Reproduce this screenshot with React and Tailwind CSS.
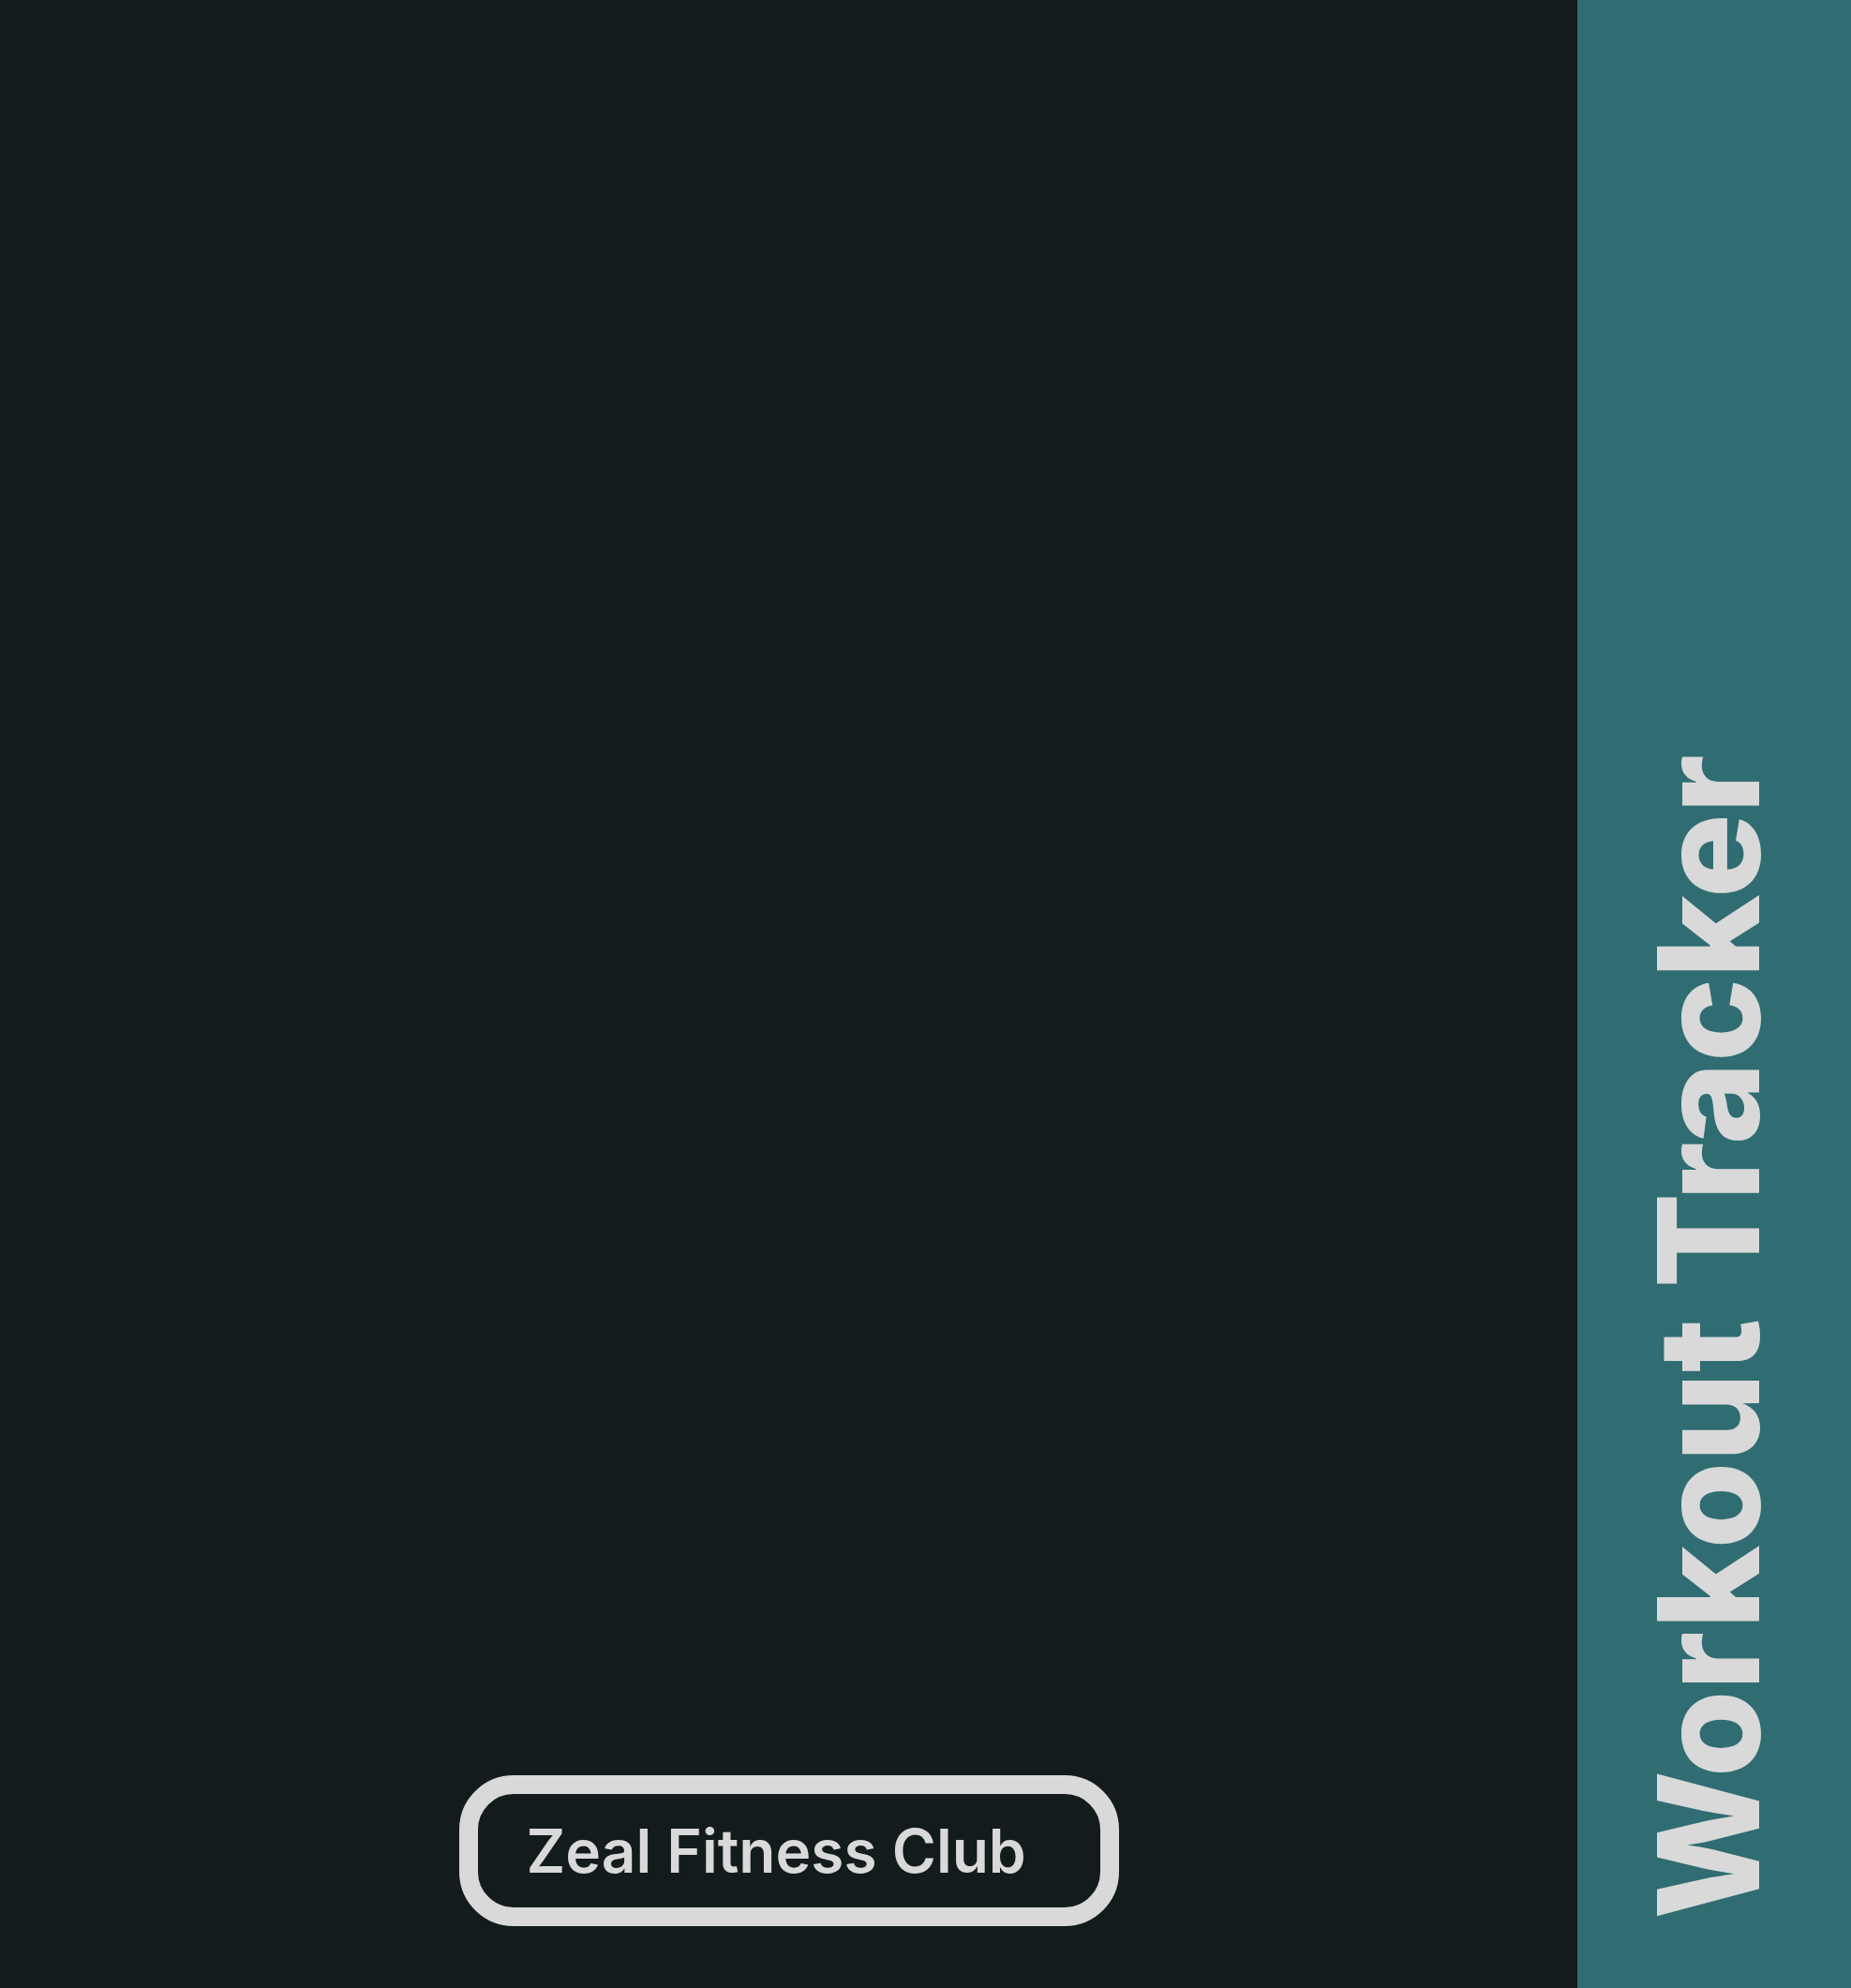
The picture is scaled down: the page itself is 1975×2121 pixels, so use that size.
export default function App() {
  return (
    <div className="flex h-[2121px] w-full bg-[#131b1d]" style={{ fontFamily: "Inter, 'Noto Sans', sans-serif" }}>
      <main className="flex flex-1 flex-col items-center justify-end pb-[66px]">
        <div className="flex h-[161px] w-[704px] items-center rounded-[58px] border-[20px] border-[#d9d9d9] pl-[52px]">
          <span className="text-[64px] font-semibold leading-none text-[#d9d9d9]">Zeal Fitness Club</span>
        </div>
      </main>
      <aside className="flex h-full w-[292px] flex-col items-center justify-end bg-[#306d72] pb-[73px] pr-[12px]">
        <span className="rotate-180 text-[150px] font-extrabold leading-none text-[#d9d9d9] [writing-mode:vertical-rl]">Workout Tracker</span>
      </aside>
    </div>
  );
}
